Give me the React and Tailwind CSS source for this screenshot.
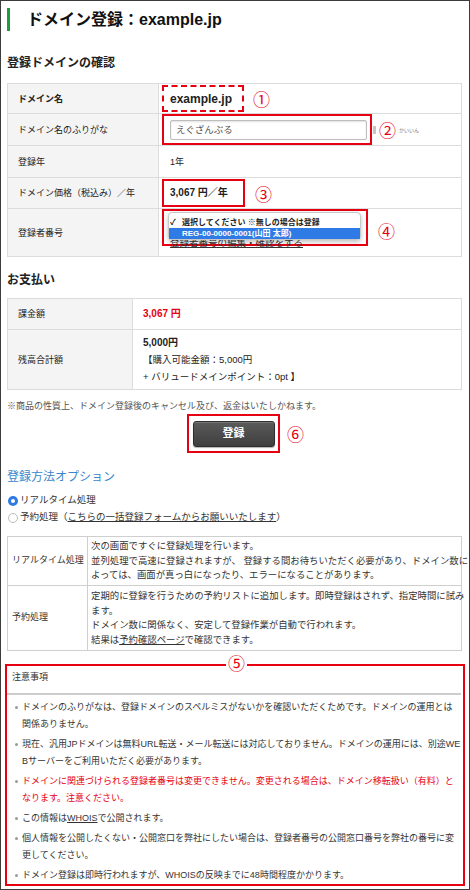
const RED = "text-[#e60012]";

function Num({ children, className = "" }) {
  return (
    <span className={"text-[#e60012] text-[17px] leading-none font-['Noto_Sans_CJK_JP',sans-serif] " + className}>
      {children}
    </span>
  );
}

export default function App() {
  return (
    <div className="w-[470px] h-[890px] border border-[#3c3c3c] bg-white text-[#222] font-['Liberation_Sans','Noto_Sans_CJK_JP',sans-serif] overflow-hidden">
      {/* header */}
      <div className="flex items-center pt-[7px] pl-[6px]">
        <div className="w-[3px] h-[23px] bg-[#1f9a3d]" />
        <div className="ml-[17px] text-[16px] font-bold leading-[23px] text-[#111]">ドメイン登録：example.jp</div>
      </div>

      <div className="pl-[6px] pr-[7px]">
        <div className="mt-[24px] text-[12px] font-bold leading-[16px]">登録ドメインの確認</div>

        {/* table 1 */}
        <div className="mt-[12px] border border-[#dcdcdc] text-[9px] leading-[12px]">
          <div className="grid grid-cols-[151px_1fr] h-[30px] border-b border-[#dcdcdc]">
            <div className="bg-[#f4f4f4] border-r border-[#dcdcdc] flex items-center pl-[10px] font-bold">ドメイン名</div>
            <div className="flex items-center pl-[3px]">
              <div className="w-[82px] h-[27px] border-2 border-dashed border-[#e60012] flex items-center pl-[6px] text-[12px] font-bold">example.jp</div>
              <Num className="ml-[9px]">①</Num>
            </div>
          </div>
          <div className="grid grid-cols-[151px_1fr] h-[32px] border-b border-[#dcdcdc]">
            <div className="bg-[#f4f4f4] border-r border-[#dcdcdc] flex items-center pl-[10px]">ドメイン名のふりがな</div>
            <div className="flex items-center pl-[3px]">
              <div className="w-[210px] h-[31px] border-2 border-[#e60012] flex items-center pl-[6px]">
                <div className="w-[197px] h-[20px] border border-[#bdbdbd] rounded-[2px] shadow-[inset_0_1px_2px_rgba(0,0,0,0.12)] flex items-center pl-[5px] text-[9.5px] text-[#555]">えぐざんぶる</div>
              </div>
              <div className="w-[3px] h-[8px] bg-[#c4c4c4] ml-[1px]" />
              <Num className="ml-[3px]">②</Num>
              <span className="ml-[3px] text-[5px] leading-[6px] text-[#777]">かいいん</span>
            </div>
          </div>
          <div className="grid grid-cols-[151px_1fr] h-[32px] border-b border-[#dcdcdc]">
            <div className="bg-[#f4f4f4] border-r border-[#dcdcdc] flex items-center pl-[10px]">登録年</div>
            <div className="flex items-center pl-[11px]">1年</div>
          </div>
          <div className="grid grid-cols-[151px_1fr] h-[31px] border-b border-[#dcdcdc]">
            <div className="bg-[#f4f4f4] border-r border-[#dcdcdc] flex items-center pl-[10px]">ドメイン価格（税込み）／年</div>
            <div className="flex items-center pl-[3px]">
              <div className="w-[83px] h-[28px] border-2 border-[#e60012] flex items-center pl-[6px] text-[10px] font-bold">3,067 円／年</div>
              <Num className="ml-[10px]">③</Num>
            </div>
          </div>
          <div className="grid grid-cols-[151px_1fr] h-[47px]">
            <div className="bg-[#f4f4f4] border-r border-[#dcdcdc] flex items-center pl-[10px]">登録者番号</div>
            <div className="flex items-start pl-[3px]">
              <div className="relative w-[206px] h-[37px] border-2 border-[#e60012]">
                <div className="pt-[26px] pl-[6px] text-[9.5px] leading-[12px] text-[#333] underline whitespace-nowrap">登録者番号の編集・確認をする</div>
                <div className="absolute left-[4px] top-[1px] w-[193px] h-[28px] bg-white border border-[#c8c8c8] rounded-[4px] shadow-[0_2px_5px_rgba(0,0,0,0.25)] pt-[3px] text-[8px] font-bold leading-[11px] whitespace-nowrap">
                  <div className="h-[12px] flex items-center pl-[1px]">
                    <span className="w-[12px] text-[8px]">✓</span>
                    <span>選択してください ※無しの場合は登録</span>
                  </div>
                  <div className="h-[11px] flex items-center pl-[13px] bg-[#2f7be6] text-white">REG-00-0000-0001(山田 太郎)</div>
                </div>
              </div>
              <Num className="ml-[10px] mt-[13px]">④</Num>
            </div>
          </div>
        </div>

        <div className="mt-[15px] text-[12px] font-bold leading-[16px]">お支払い</div>

        {/* table 2 */}
        <div className="mt-[10px] border border-[#dcdcdc] text-[9px] leading-[12px]">
          <div className="grid grid-cols-[125px_1fr] h-[31px] border-b border-[#dcdcdc]">
            <div className="bg-[#f4f4f4] border-r border-[#dcdcdc] flex items-center pl-[10px]">課金額</div>
            <div className={"flex items-center pl-[10px] text-[10px] font-bold " + RED}>3,067 円</div>
          </div>
          <div className="grid grid-cols-[125px_1fr] h-[59px]">
            <div className="bg-[#f4f4f4] border-r border-[#dcdcdc] flex items-center pl-[10px]">残高合計額</div>
            <div className="flex flex-col justify-center pl-[10px] leading-[17px] text-[9.5px]">
              <div className="font-bold text-[10px]">5,000円</div>
              <div>【購入可能金額：5,000円</div>
              <div>+ バリュードメインポイント：0pt 】</div>
            </div>
          </div>
        </div>

        <div className="mt-[10px] text-[9px] leading-[12px] text-[#555]">※商品の性質上、ドメイン登録後のキャンセル及び、返金はいたしかねます。</div>

        {/* button */}
        <div className="mt-[2px] pl-[180px] flex items-center">
          <div className="w-[93px] h-[39px] border-2 border-[#e60012] flex items-center justify-center">
            <div className="w-[82px] h-[26px] rounded-[3px] border border-[#2e2e2e] bg-linear-to-b from-[#5a5a5a] to-[#3f3f3f] shadow-[inset_0_1px_0_rgba(255,255,255,0.18),0_1px_1px_rgba(0,0,0,0.3)] flex items-center justify-center text-white text-[11px] font-bold">登録</div>
          </div>
          <Num className="ml-[7px]">⑥</Num>
        </div>

        <div className="mt-[16px] text-[12px] leading-[16px] text-[#3a86cc]">登録方法オプション</div>

        <div className="mt-[7px] text-[9.5px] text-[#333]">
          <div className="h-[17px] flex items-center pl-[1px]">
            <div className="w-[10px] h-[10px] rounded-full bg-[#2f7be6] flex items-center justify-center">
              <div className="w-[4px] h-[4px] rounded-full bg-white" />
            </div>
            <span className="ml-[2px]">リアルタイム処理</span>
          </div>
          <div className="h-[17px] flex items-center pl-[1px]">
            <div className="w-[10px] h-[10px] rounded-full border border-[#bdbdbd] bg-white" />
            <span className="ml-[2px]">予約処理（<span className="underline">こちらの一括登録フォームからお願いいたします</span>）</span>
          </div>
        </div>

        {/* options table */}
        <div className="mt-[10px] border border-[#cfcfcf] text-[#333]">
          <div className="grid grid-cols-[80px_1fr] h-[49px] border-b border-[#cfcfcf]">
            <div className="border-r border-[#cfcfcf] flex items-center pl-[4px] text-[9px]">リアルタイム処理</div>
            <div className="flex flex-col justify-center pl-[3px] text-[9.4px] leading-[14.5px] whitespace-nowrap">
              <div>次の画面ですぐに登録処理を行います。</div>
              <div>並列処理で高速に登録されますが、 登録する間お待ちいただく必要があり、ドメイン数に</div>
              <div>よっては、画面が真っ白になったり、エラーになることがあります。</div>
            </div>
          </div>
          <div className="grid grid-cols-[80px_1fr] h-[64px]">
            <div className="border-r border-[#cfcfcf] flex items-center pl-[4px] text-[9px]">予約処理</div>
            <div className="flex flex-col justify-center pl-[3px] text-[9.4px] leading-[14.5px] whitespace-nowrap">
              <div>定期的に登録を行うための予約リストに追加します。即時登録はされず、指定時間に試み</div>
              <div>ます。</div>
              <div>ドメイン数に関係なく、安定して登録作業が自動で行われます。</div>
              <div>結果は<span className="underline">予約確認ページ</span>で確認できます。</div>
            </div>
          </div>
        </div>
      </div>

      {/* notes */}
      <div className="relative mx-[4px] mt-[13px] h-[222px] border-2 border-[#e60012]">
        <span className="absolute left-[219px] top-[-12px] bg-white px-[2px] text-[#e60012] text-[17px] leading-none font-['Noto_Sans_CJK_JP',sans-serif]">⑤</span>
        <div className="pl-[5px] pt-[4px] pb-[9px] mr-[2px] border-b-2 border-[#cdcdcd] text-[9px] leading-[14px] text-[#333]">注意事項</div>
        <div className="pt-[4px] flex flex-col gap-[3px] text-[9px] leading-[17px] text-[#333] whitespace-nowrap">
          <div className="flex pl-[8px]">
            <div className="w-[3px] h-[3px] rounded-full bg-[#9a9a9a] mt-[7px] mr-[4px] shrink-0" />
            <div>
              <div>ドメインのふりがなは、登録ドメインのスペルミスがないかを確認いただくためです。ドメインの運用とは</div>
              <div>関係ありません。</div>
            </div>
          </div>
          <div className="flex pl-[8px]">
            <div className="w-[3px] h-[3px] rounded-full bg-[#9a9a9a] mt-[7px] mr-[4px] shrink-0" />
            <div>
              <div>現在、汎用JPドメインは無料URL転送・メール転送には対応しておりません。ドメインの運用には、別途WE</div>
              <div>Bサーバーをご利用いただく必要があります。</div>
            </div>
          </div>
          <div className="flex pl-[8px]">
            <div className="w-[3px] h-[3px] rounded-full bg-[#9a9a9a] mt-[7px] mr-[4px] shrink-0" />
            <div className="text-[#e60012]">
              <div>ドメインに関連づけられる登録者番号は変更できません。変更される場合は、ドメイン移転扱い（有料）と</div>
              <div>なります。注意ください。</div>
            </div>
          </div>
          <div className="flex pl-[8px]">
            <div className="w-[3px] h-[3px] rounded-full bg-[#9a9a9a] mt-[7px] mr-[4px] shrink-0" />
            <div>この情報は<span className="underline">WHOIS</span>で公開されます。</div>
          </div>
          <div className="flex pl-[8px]">
            <div className="w-[3px] h-[3px] rounded-full bg-[#9a9a9a] mt-[7px] mr-[4px] shrink-0" />
            <div>
              <div>個人情報を公開したくない・公開窓口を弊社にしたい場合は、登録者番号の公開窓口番号を弊社の番号に変</div>
              <div>更してください。</div>
            </div>
          </div>
          <div className="flex pl-[8px]">
            <div className="w-[3px] h-[3px] rounded-full bg-[#9a9a9a] mt-[7px] mr-[4px] shrink-0" />
            <div>ドメイン登録は即時行われますが、WHOISの反映までに48時間程度かかります。</div>
          </div>
        </div>
      </div>
    </div>
  );
}
